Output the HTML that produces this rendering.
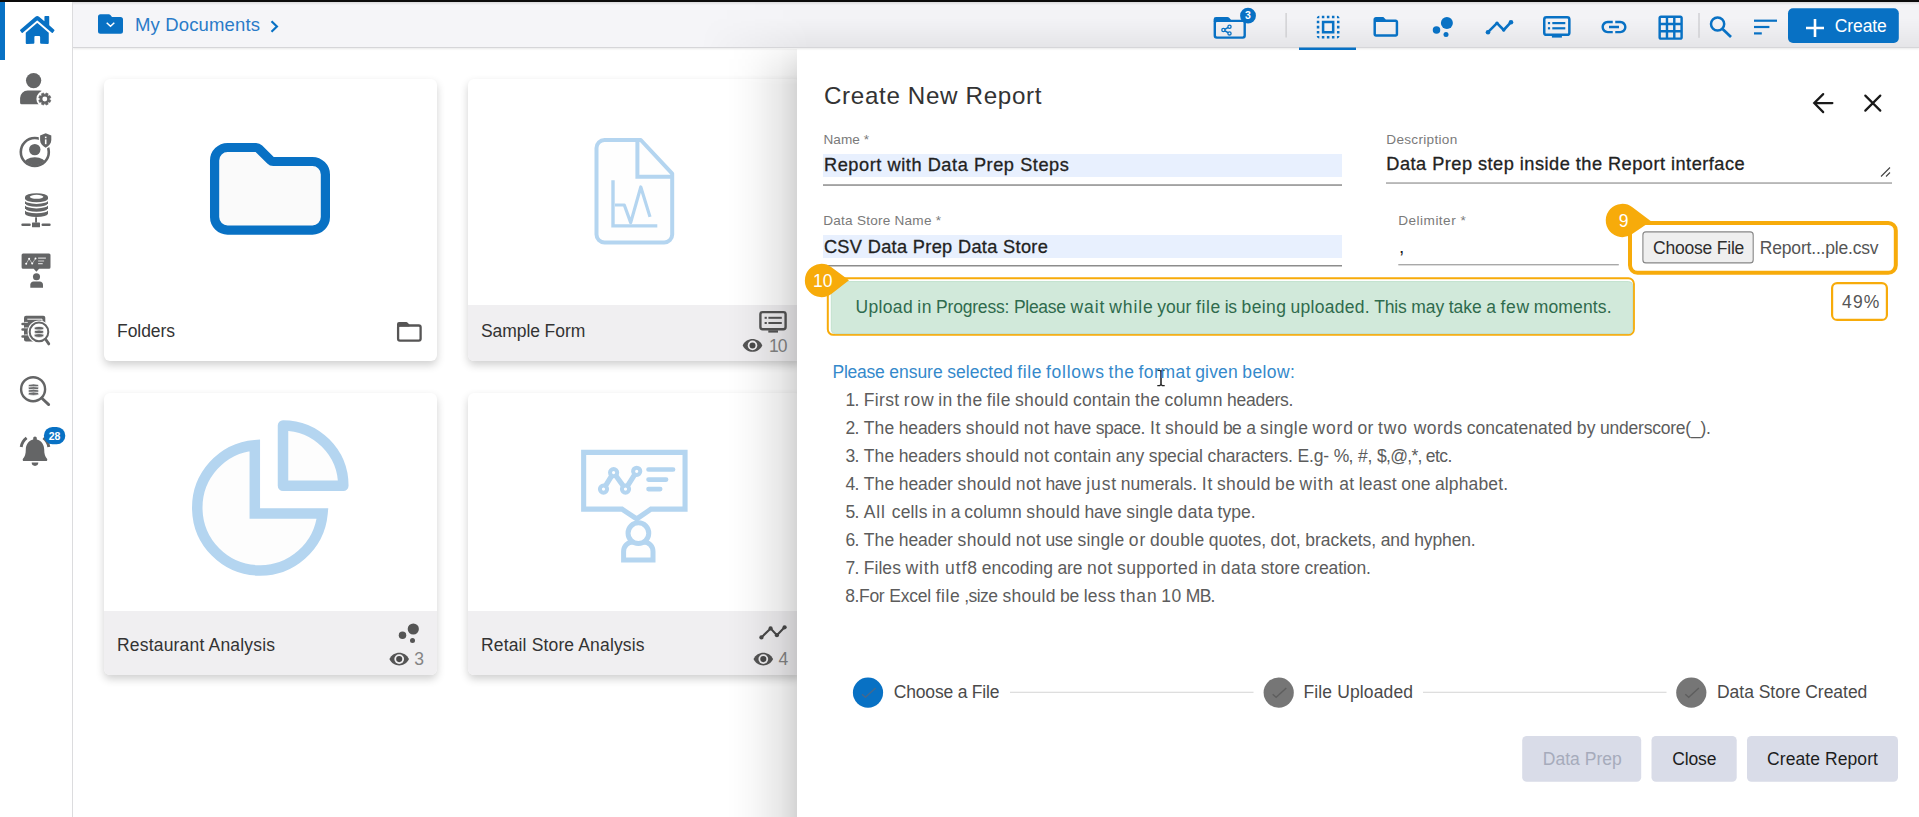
<!DOCTYPE html>
<html><head><meta charset="utf-8"><title>My Documents</title>
<style>
html,body{margin:0;padding:0;}
html{width:1919px;height:817px;overflow:hidden;}
body{width:1919px;height:817px;overflow:hidden;background:#fff;position:relative;font-family:"Liberation Sans",sans-serif;}
.t{position:absolute;white-space:nowrap;line-height:1;}
.a{position:absolute;}
svg{position:absolute;overflow:visible;}
</style></head><body>
<div class="a" style="left:73px;top:2px;width:1846px;height:45px;background:#f5f5f8;border-bottom:1px solid #d6d6d9;box-shadow:0 1px 2px rgba(0,0,0,.09);"></div>
<div class="a" style="left:700px;top:2px;width:1219px;height:45px;background:linear-gradient(180deg,rgba(0,0,0,.004) 0,rgba(0,0,0,.008) 35%,rgba(0,0,0,.035) 70%,rgba(0,0,0,.062) 100%);-webkit-mask-image:linear-gradient(90deg,transparent 0,#000 110px);mask-image:linear-gradient(90deg,transparent 0,#000 110px);"></div>
<div class="a" style="left:73px;top:2px;width:1846px;height:3px;background:linear-gradient(180deg,rgba(0,0,0,.11),rgba(0,0,0,0));"></div>
<div class="a" style="left:0;top:2px;width:72px;height:815px;background:#fff;border-right:1px solid #dcdcde;"></div>
<div class="a" style="left:0;top:2px;width:5px;height:58px;background:#0871c4;"></div>
<div class="a" style="left:0;top:0;width:1919px;height:2px;background:#0c0c0c;"></div>
<svg style="left:19.8px;top:13.81px" width="34.50" height="31.89" viewBox="0 0 576 512" preserveAspectRatio="none"><path fill="#0871c4" d="M280.37 148.26L96 300.11V464a16 16 0 0 0 16 16l112.06-.29a16 16 0 0 0 15.92-16V368a16 16 0 0 1 16-16h64a16 16 0 0 1 16 16v95.64a16 16 0 0 0 16 16.05L464 480a16 16 0 0 0 16-16V300L295.67 148.26a12.19 12.19 0 0 0-15.3 0zM571.6 251.47L488 182.56V44.05a12 12 0 0 0-12-12h-56a12 12 0 0 0-12 12v72.61L318.47 43a48 48 0 0 0-61 0L4.34 251.47a12 12 0 0 0-1.6 16.9l25.5 31A12 12 0 0 0 45.15 301l235.22-193.74a12.19 12.19 0 0 1 15.3 0L530.9 301a12 12 0 0 0 16.9-1.6l25.5-31a12 12 0 0 0-1.7-16.93z"/></svg>
<svg style="left:0;top:0" width="80" height="817" viewBox="0 0 80 817"><path fill="#646566" d="M20.100 102.700v-4.700a7.600 7.600 0 0 1 7.600-7.600h12.300a6 6 0 0 1 4 1.500v12.300h-22.400a1.500 1.500 0 0 1-1.500-1.500z"/><circle cx="33.600" cy="80.600" r="8.900" fill="#fff"/><circle cx="33.600" cy="80.600" r="7.650" fill="#646566"/><circle cx="44.8" cy="99" r="8.4" fill="#fff"/><path d="M50.88 100.21L49.96 102.44L48.60 101.90L47.70 102.80L48.24 104.16L46.01 105.08L45.44 103.73L44.16 103.73L43.59 105.08L41.36 104.16L41.90 102.80L41.00 101.90L39.64 102.44L38.72 100.21L40.07 99.64L40.07 98.36L38.72 97.79L39.64 95.56L41.00 96.10L41.90 95.20L41.36 93.84L43.59 92.92L44.16 94.27L45.44 94.27L46.01 92.92L48.24 93.84L47.70 95.20L48.60 96.10L49.96 95.56L50.88 97.79L49.53 98.36L49.53 99.64Z" fill="#646566" stroke="#646566" stroke-width=".6" stroke-linejoin="round"/><circle cx="44.8" cy="99" r="2.48" fill="#fff"/><clipPath id="uc"><circle cx="34.8" cy="152" r="13.2"/></clipPath><circle cx="34.8" cy="152" r="14" fill="none" stroke="#646566" stroke-width="2.6"/><circle cx="34.8" cy="149.600" r="5.700" fill="#646566"/><ellipse cx="34.8" cy="164" rx="11.200" ry="6.800" fill="#646566" clip-path="url(#uc)"/><path d="M45.700 133.300l5.600 2.200v4.500c0 3.500-2.400 6.200-5.600 7.700-3.200-1.500-5.600-4.200-5.600-7.700v-4.500z" fill="#646566" stroke="#fff" stroke-width="2.600" stroke-linejoin="round"/><path d="M45.700 133.300l5.600 2.200v4.500c0 3.500-2.400 6.200-5.600 7.700-3.200-1.500-5.600-4.200-5.600-7.700v-4.500z" fill="#646566"/><rect x="44.900" y="139.400" width="1.600" height="4.800" fill="#fff"/><rect x="44.900" y="136.600" width="1.600" height="1.600" fill="#fff"/><path fill="#646566" d="M25 196.800v16.700a11.500 3.600 0 0 0 23 0v-16.700a11.500 3.600 0 0 0-23 0z"/><ellipse cx="36.600" cy="196.800" rx="6.800" ry="2" fill="#fff"/><path d="M25 199.5a11.500 3.600 0 0 0 23 0" fill="none" stroke="#fff" stroke-width="1.600"/><path d="M25 204.05a11.500 3.600 0 0 0 23 0" fill="none" stroke="#fff" stroke-width="1.600"/><path d="M25 208.95a11.500 3.600 0 0 0 23 0" fill="none" stroke="#fff" stroke-width="1.600"/><rect x="35.100" y="217.300" width="1.900" height="5.300" fill="#646566"/><rect x="32" y="222.400" width="8" height="4.900" rx=".6" fill="#646566"/><path d="M22.500 224.800h7.100M42.700 224.800h6.800" stroke="#646566" stroke-width="2.400" stroke-linecap="round"/><path fill="#646566" d="M23.100 253.400h25.900a1.500 1.500 0 0 1 1.500 1.500v12.300a1.500 1.500 0 0 1-1.500 1.500h-9.900l-2.700 3.100-2.700-3.100h-10.600a1.500 1.500 0 0 1-1.500-1.500v-12.300a1.500 1.500 0 0 1 1.500-1.500z"/><path d="M26.200 263.700l2.900-4.900 3.100 4.800 3.300-5.100" fill="none" stroke="#fff" stroke-opacity=".75" stroke-width=".7"/><circle cx="26.2" cy="263.7" r="1" fill="#fff"/><circle cx="29.1" cy="258.8" r="1" fill="#fff"/><circle cx="32.2" cy="263.6" r="1" fill="#fff"/><circle cx="35.5" cy="258.5" r="1" fill="#fff"/><path d="M38.100 258.100h7.800M38.100 261h6M38.100 263.700h4.600" stroke="#fff" stroke-opacity=".72" stroke-width="1.200"/><circle cx="36.500" cy="276.800" r="3.550" fill="#646566"/><path fill="#646566" d="M30.300 287.800v-3.200c0-1.900 1.400-3.200 3.200-3.200h6.300c1.800 0 3.200 1.300 3.200 3.200v3.200z"/><rect x="24" y="315.700" width="21.300" height="25.800" rx="2" fill="#646566"/><path d="M27.300 319.200h14.700v6" fill="none" stroke="#fff" stroke-width="1"/><path stroke="#646566" stroke-width="2.600" stroke-linecap="round" d="M22.600 324h4M22.600 329.500h4M22.600 336.500h4"/><path stroke="#fff" stroke-width=".8" d="M24.300 322.400h3.500M24.300 327.900h3.500M24.300 334.900h3.500"/><path stroke="#fff" stroke-width="5" stroke-linecap="round" d="M45.300 339.300l3.300 4.600"/><circle cx="39" cy="331.900" r="11.400" fill="#fff"/><circle cx="39" cy="331.900" r="9.300" fill="#fff" stroke="#646566" stroke-width="2"/><path stroke="#646566" stroke-width="2.800" stroke-linecap="round" d="M45.600 339.300l3.200 4.600"/><ellipse cx="39" cy="328.3" rx="4.800" ry="1.900" fill="#646566" stroke="#fff" stroke-width=".7"/><ellipse cx="39" cy="331.9" rx="4.800" ry="1.900" fill="#646566" stroke="#fff" stroke-width=".7"/><ellipse cx="39" cy="335.5" rx="4.800" ry="1.900" fill="#646566" stroke="#fff" stroke-width=".7"/><circle cx="33.100" cy="389.200" r="12" fill="#fff" stroke="#646566" stroke-width="2.400"/><path stroke="#646566" stroke-width="2.800" stroke-linecap="round" d="M41.900 398.300l6.800 6.300"/><ellipse cx="33.500" cy="385.6" rx="5.300" ry="1.700" fill="#6a6b6d" stroke="#fff" stroke-width=".7"/><ellipse cx="33.500" cy="388.3" rx="5.300" ry="1.700" fill="#6a6b6d" stroke="#fff" stroke-width=".7"/><ellipse cx="33.500" cy="391" rx="5.300" ry="1.700" fill="#6a6b6d" stroke="#fff" stroke-width=".7"/><ellipse cx="33.500" cy="393.7" rx="5.300" ry="1.700" fill="#6a6b6d" stroke="#fff" stroke-width=".7"/><path fill="#646566" d="M35 436.400c1 0 1.800.8 1.800 1.800v1.200c4.500 1 7.400 5.200 7.400 10.100 0 4.600.9 7.200 2.800 9.200.7.800.2 2.400-.9 2.400h-22.200c-1.100 0-1.600-1.600-.9-2.400 1.900-2 2.800-4.600 2.800-9.200 0-4.900 2.900-9.100 7.400-10.100v-1.200c0-1 .8-1.800 1.800-1.800z"/><path fill="#646566" d="M31.700 462.600h6.600a3.300 3.300 0 0 1-6.600 0z"/><path fill="none" stroke="#646566" stroke-width="2.900" stroke-linecap="butt" d="M26.600 437.800c-3 2.300-4.900 5.400-5.400 9.200M43.400 437.800c3 2.300 4.900 5.400 5.400 9.200"/><rect x="43.900" y="427.100" width="21.400" height="17.200" rx="8.600" fill="#0871c4"/></svg>
<span class="t" style="left:48.76px;top:431px;font-size:10.5px;color:#fff;font-weight:bold;">28</span>
<svg style="left:0;top:0" width="1919" height="60" viewBox="0 0 1919 60"><path fill="#0871c4" d="M100.500 14.300h8.200c.7 0 1.300.3 1.700.8l1.600 2h8.500a2.500 2.500 0 0 1 2.500 2.500v11.700a2.500 2.500 0 0 1-2.500 2.500h-20a2.500 2.500 0 0 1-2.500-2.500v-14.500a2.500 2.500 0 0 1 2.500-2.500z"/><path d="M106.700 22.700l3.800 3.600 3.800-3.600" fill="none" stroke="#fff" stroke-width="1.500"/><path d="M271.500 21.300l5.400 5.200-5.400 5.200" fill="none" stroke="#0871c4" stroke-width="2.200"/><path fill="#0871c4" d="M1213.600 22v-2.600a2.400 2.400 0 0 1 2.400-2.400h11.400c.7 0 1.400.3 1.800.8l1.900 2.100v2.100z"/><rect x="1214.800" y="20.900" width="29.900" height="16.700" rx="2" fill="none" stroke="#0871c4" stroke-width="2.400"/><path d="M1229.300 26.800l-5.900 3.200 5.900 3.400" fill="none" stroke="#0871c4" stroke-width="1.500"/><circle cx="1223.4" cy="30" r="1.600" fill="#f0f0f2" stroke="#0871c4" stroke-width="1.300"/><circle cx="1229.5" cy="26.7" r="1.600" fill="#f0f0f2" stroke="#0871c4" stroke-width="1.300"/><circle cx="1229.5" cy="33.4" r="1.600" fill="#f0f0f2" stroke="#0871c4" stroke-width="1.300"/><circle cx="1248" cy="15.650" r="7.900" fill="#0871c4"/><rect x="1285.500" y="13" width="1.200" height="24.500" fill="#c9c9cc"/><rect x="1698.400" y="13" width="1.200" height="24.800" fill="#c9c9cc"/><rect x="1299" y="47.500" width="57" height="2.500" fill="#0871c4"/><circle cx="1446.9" cy="23.1" r="6" fill="#0871c4"/><circle cx="1436.5" cy="30" r="3.75" fill="#0871c4"/><circle cx="1446" cy="34.4" r="2.5" fill="#0871c4"/><path d="M1488 32.200L1497 23.200L1503.700 30L1511 22.200" fill="none" stroke="#0871c4" stroke-width="2.600" stroke-linejoin="round" stroke-linecap="round"/><circle cx="1488" cy="32.200" r="2.300" fill="#0871c4"/><circle cx="1511" cy="22.200" r="2.300" fill="#0871c4"/><circle cx="1497" cy="23.200" r="1.700" fill="#0871c4"/><circle cx="1503.700" cy="30" r="1.700" fill="#0871c4"/><rect x="1544.250" y="17.250" width="25.100" height="17.600" rx="2.200" fill="none" stroke="#0871c4" stroke-width="2.500"/><rect x="1551.900" y="35.500" width="10" height="2.100" fill="#0871c4"/><rect x="1547.900" y="22.0" width="2.200" height="2.200" fill="#0871c4"/><rect x="1552.300" y="22.0" width="13" height="2.200" fill="#0871c4"/><rect x="1547.900" y="27.2" width="2.200" height="2.200" fill="#0871c4"/><rect x="1552.300" y="27.2" width="13" height="2.200" fill="#0871c4"/><circle cx="1717.600" cy="24" r="6.600" fill="none" stroke="#0871c4" stroke-width="2.500"/><path d="M1722.600 29l8.400 8" stroke="#0871c4" stroke-width="2.700"/><rect x="1754" y="19.600" width="23" height="2.200" fill="#0871c4"/><rect x="1754" y="25.900" width="15.400" height="2.200" fill="#0871c4"/><rect x="1754" y="32.300" width="7.800" height="2.200" fill="#0871c4"/><rect x="1788" y="8.300" width="110.800" height="34.600" rx="5" fill="#0871c4"/><path d="M1806 28h18M1815 19v18" stroke="#fff" stroke-width="2.600"/></svg>
<svg style="left:1313.22px;top:12.22px" width="30.27" height="30.27" viewBox="0 0 24 24"><path fill="#0871c4" d="M3 5h2V3c-1.1 0-2 .9-2 2zm0 8h2v-2H3v2zm4 8h2v-2H7v2zM3 9h2V7H3v2zm10-6h-2v2h2V3zm6 0v2h2c0-1.1-.9-2-2-2zM5 21v-2H3c0 1.1.9 2 2 2zm-2-4h2v-2H3v2zM9 3H7v2h2V3zm2 18h2v-2h-2v2zm8-8h2v-2h-2v2zm0 8c1.1 0 2-.9 2-2h-2v2zm0-12h2V7h-2v2zm0 8h2v-2h-2v2zm-4 4h2v-2h-2v2zm0-16h2V3h-2v2zM7 17h10V7H7v10zm2-8h6v6H9V9z"/></svg>
<svg style="left:1370.53px;top:12.06px" width="29.64" height="29.64" viewBox="0 0 24 24"><path fill="#0871c4" d="M20 6h-8l-2-2H4c-1.1 0-1.99.9-1.99 2L2 18c0 1.1.9 2 2 2h16c1.100 0 2-.9 2-2V8c0-1.100-.9-2-2-2zm0 12H4V8h16v10z"/></svg>
<svg style="left:1598.50px;top:12.00px" width="30.00" height="30.00" viewBox="0 0 24 24"><path fill="#0871c4" d="M3.900 12c0-1.710 1.390-3.100 3.100-3.100h4V7H7c-2.760 0-5 2.240-5 5s2.240 5 5 5h4v-1.900H7c-1.710 0-3.100-1.390-3.100-3.100zM8 13h8v-2H8v2zm9-6h-4v1.900h4c1.710 0 3.100 1.390 3.100 3.100s-1.390 3.100-3.100 3.100h-4V17h4c2.760 0 5-2.240 5-5s-2.240-5-5-5z"/></svg>
<svg style="left:1656.46px;top:12.56px" width="29.28" height="29.28" viewBox="0 0 24 24"><path fill="#0871c4" d="M20 2H4c-1.100 0-2 .9-2 2v16c0 1.100.9 2 2 2h16c1.100 0 2-.9 2-2V4c0-1.100-.9-2-2-2zM8 20H4v-4h4v4zm0-6H4v-4h4v4zm0-6H4V4h4v4zm6 12h-4v-4h4v4zm0-6h-4v-4h4v4zm0-6h-4V4h4v4zm6 12h-4v-4h4v4zm0-6h-4v-4h4v4zm0-6h-4V4h4v4z"/></svg>
<span class="t" style="left:135.00px;top:16px;font-size:18.5px;color:#2a7bc8;letter-spacing:0.149px;">My Documents</span>
<span class="t" style="left:1834.80px;top:18px;font-size:17.5px;color:#fff;letter-spacing:-0.104px;">Create</span>
<span class="t" style="left:1245.08px;top:10px;font-size:10.5px;color:#fff;font-weight:bold;">3</span>
<div class="a" style="left:104px;top:79px;width:333px;height:282px;background:#fff;border-radius:6px;box-shadow:0 4px 8px 0 rgba(0,0,0,.19);"></div>
<div class="a" style="left:468px;top:79px;width:333px;height:282px;background:#fff;border-radius:6px;box-shadow:0 4px 8px 0 rgba(0,0,0,.19);overflow:hidden"><div class="a" style="left:0;top:225.500px;width:333px;height:57px;background:#f0eff1"></div></div>
<div class="a" style="left:104px;top:392.500px;width:333px;height:282.300px;background:#fff;border-radius:6px;box-shadow:0 4px 8px 0 rgba(0,0,0,.19);overflow:hidden"><div class="a" style="left:0;top:218.700px;width:333px;height:64px;background:#f0eff1"></div></div>
<div class="a" style="left:468px;top:392.500px;width:333px;height:282.300px;background:#fff;border-radius:6px;box-shadow:0 4px 8px 0 rgba(0,0,0,.19);overflow:hidden"><div class="a" style="left:0;top:218.700px;width:333px;height:64px;background:#f0eff1"></div></div>
<svg style="left:0;top:0" width="840" height="817" viewBox="0 0 840 817"><path d="M227.600 147.500h28.500a4 4 0 0 1 2.800 1.200l11.600 11.600a4 4 0 0 0 2.800 1.200h39.100a13 13 0 0 1 13 13v42.600a13 13 0 0 1-13 13h-84.800a13 13 0 0 1-13-13v-56.600a13 13 0 0 1 13-13z" fill="#fafafa" stroke="#0871c4" stroke-width="9.200" stroke-linejoin="round"/><rect x="398.100" y="325.500" width="22.500" height="15.100" rx="1.800" fill="none" stroke="#565555" stroke-width="2.300"/><path d="M397 326.500v-2.500a2 2 0 0 1 2-2h7.200c.6 0 1.100.2 1.500.7l1.700 1.800v2z" fill="#565555"/><path d="M604.500 140h36.300l31.400 33.600v60.800a8 8 0 0 1-8 8h-59.700a8 8 0 0 1-8-8v-86.400a8 8 0 0 1 8-8z" fill="#fefefe" stroke="#b4d5f0" stroke-width="4" stroke-linejoin="round"/><path d="M637.400 140v36.700h34.600" fill="none" stroke="#b4d5f0" stroke-width="4"/><path d="M613 180.200v45.700h44.300" fill="none" stroke="#b4d5f0" stroke-width="3.400"/><path d="M615 205h9.300l6.400 17.600 10.100-35.600 9.200 29.900" fill="none" stroke="#b4d5f0" stroke-width="3.200" stroke-linejoin="round"/><rect x="760.400" y="312.100" width="25.200" height="17.100" rx="2.200" fill="none" stroke="#555" stroke-width="2.400"/><rect x="768.300" y="330.300" width="9.700" height="2.300" fill="#555"/><rect x="764.600" y="316.8" width="2.200" height="2" fill="#555"/><rect x="768.400" y="316.8" width="13.400" height="2" fill="#555"/><rect x="764.600" y="322" width="2.200" height="2" fill="#555"/><rect x="768.400" y="322" width="13.400" height="2" fill="#555"/><path d="M742.70 345.40C746.62 336.95 758.38 336.95 762.30 345.40C758.38 353.85 746.62 353.85 742.70 345.40Z" fill="#555"/><circle cx="752.50" cy="345.40" r="4.80" fill="#f0eff1"/><circle cx="752.50" cy="345.40" r="3.01" fill="#4a4a4a"/><path d="M389.40 659.10C393.32 650.52 405.08 650.52 409.00 659.10C405.08 667.68 393.32 667.68 389.40 659.10Z" fill="#555"/><circle cx="399.20" cy="659.10" r="4.88" fill="#f0eff1"/><circle cx="399.20" cy="659.10" r="3.05" fill="#4a4a4a"/><path d="M753.50 659.10C757.42 650.52 769.18 650.52 773.10 659.10C769.18 667.68 757.42 667.68 753.50 659.10Z" fill="#555"/><circle cx="763.30" cy="659.10" r="4.88" fill="#f0eff1"/><circle cx="763.30" cy="659.10" r="3.05" fill="#4a4a4a"/><path d="M254.800 513.500V445.200A62.750 62.750 0 1 0 322.500 513.500Z" fill="#fdfdfd" stroke="#b4d5f0" stroke-width="10.500" stroke-linejoin="miter"/><path d="M283 485.700V425.400A60.300 60.300 0 0 1 343.300 485.700Z" fill="#fdfdfd" stroke="#b4d5f0" stroke-width="10.500" stroke-linejoin="round"/><circle cx="413.3" cy="629" r="5.6" fill="#555"/><circle cx="402.5" cy="635.2" r="3.75" fill="#555"/><circle cx="412.5" cy="640.4" r="2.5" fill="#555"/><path d="M583.650 452.350h101.400v56.800h-34.100l-14.200 9.700-14.800-9.700h-38.300z" fill="#fefefe" stroke="#b4d5f0" stroke-width="5.100" stroke-linejoin="miter"/><path d="M603.500 489.100L613.600 472.600L625.500 489.100L636.700 471.300" fill="none" stroke="#b4d5f0" stroke-width="5.200"/><circle cx="603.5" cy="489.1" r="3.600" fill="#fefefe" stroke="#b4d5f0" stroke-width="4"/><circle cx="613.6" cy="472.6" r="3.600" fill="#fefefe" stroke="#b4d5f0" stroke-width="4"/><circle cx="625.5" cy="489.1" r="3.600" fill="#fefefe" stroke="#b4d5f0" stroke-width="4"/><circle cx="636.7" cy="471.3" r="3.600" fill="#fefefe" stroke="#b4d5f0" stroke-width="4"/><path d="M648.500 469.500h24.600M648.500 479.600h17.600M648.500 489.100h11.700" stroke="#b4d5f0" stroke-width="4.600" stroke-linecap="round"/><path d="M623.600 560v-8.500c0-5.500 4-9.500 9.500-9.500h10.400c5.500 0 9.500 4 9.500 9.500v8.500z" fill="#fefefe" stroke="#b4d5f0" stroke-width="5"/><circle cx="638.400" cy="533.200" r="10.350" fill="#fefefe" stroke="#b4d5f0" stroke-width="5"/><path d="M761.400 637.400L770.600 628.400L776.900 635.200L784.600 627.300" fill="none" stroke="#4a4a4a" stroke-width="2.100" stroke-linejoin="round" stroke-linecap="round"/><circle cx="761.4" cy="637.4" r="2.100" fill="#4a4a4a"/><circle cx="770.6" cy="628.4" r="2.100" fill="#4a4a4a"/><circle cx="776.9" cy="635.2" r="2.100" fill="#4a4a4a"/><circle cx="784.6" cy="627.3" r="2.100" fill="#4a4a4a"/></svg>
<span class="t" style="left:117.00px;top:323px;font-size:17.5px;color:#333;letter-spacing:-0.058px;">Folders</span>
<span class="t" style="left:481.00px;top:323px;font-size:17.5px;color:#333;letter-spacing:-0.082px;">Sample Form</span>
<span class="t" style="left:117.00px;top:637px;font-size:17.5px;color:#333;letter-spacing:0.186px;">Restaurant Analysis</span>
<span class="t" style="left:481.00px;top:637px;font-size:17.5px;color:#333;letter-spacing:0.151px;">Retail Store Analysis</span>
<span class="t" style="left:769.00px;top:338px;font-size:17.5px;color:#858585;letter-spacing:-0.963px;">10</span>
<span class="t" style="left:414.30px;top:651px;font-size:17.5px;color:#858585;">3</span>
<span class="t" style="left:778.60px;top:651px;font-size:17.5px;color:#858585;">4</span>
<div class="a" style="left:727px;top:49px;width:70px;height:768px;-webkit-mask-image:linear-gradient(180deg,rgba(0,0,0,.3) 0,#000 36px);mask-image:linear-gradient(180deg,rgba(0,0,0,.3) 0,#000 36px);background:linear-gradient(90deg,rgba(0,0,0,0) 0,rgba(0,0,0,.012) 18.6%,rgba(0,0,0,.025) 33%,rgba(0,0,0,.045) 47%,rgba(0,0,0,.065) 61%,rgba(0,0,0,.09) 76%,rgba(0,0,0,.135) 90%,rgba(0,0,0,.17) 100%);"></div>
<div class="a" style="left:797px;top:50.500px;width:1122px;height:766.500px;background:#fff;border-radius:3px 0 0 0;"></div>
<svg style="left:0;top:0" width="1919" height="817" viewBox="0 0 1919 817"><path d="M1832.400 103.100h-17.800M1823.200 94.100l-9 9 9 9" fill="none" stroke="#1a1a1a" stroke-width="2.200" stroke-linecap="round" stroke-linejoin="miter"/><path d="M1865.300 95.600l15 15M1880.300 95.600l-15 15" stroke="#1a1a1a" stroke-width="2.200" stroke-linecap="round"/><rect x="823" y="154" width="519" height="23" fill="#e8f0fe"/><rect x="823" y="235" width="519" height="23" fill="#e8f0fe"/><rect x="823" y="184.300" width="519" height="1.500" fill="#8c8c8c"/><rect x="1386" y="182.300" width="506" height="1.500" fill="#a6a6a6"/><rect x="823" y="265" width="519" height="1.500" fill="#8c8c8c"/><rect x="1398.300" y="264" width="220.500" height="1.400" fill="#a9a9a9"/><path d="M1881 176.500l9-9M1886 176.500l4-4" stroke="#444" stroke-width="1.100"/><rect x="827.800" y="278.300" width="806.100" height="56.500" rx="5.500" fill="#fff" stroke="#f7ab0a" stroke-width="2"/><rect x="831.300" y="281.600" width="801.300" height="52" rx="4" fill="#d1e9da" stroke="#c2e2cd" stroke-width="1"/><path d="M831.48 267.18A16.65 16.65 0 1 0 831.68 293.68L849 280.3Z" fill="#f7ab0a"/><rect x="1630" y="223" width="265.800" height="49.800" rx="7.500" fill="#fff" stroke="#f7ab0a" stroke-width="4"/><path d="M1632.42 207.20A16.65 16.65 0 1 0 1631.76 234.27L1651 221.2Z" fill="#f7ab0a"/><rect x="1642.900" y="231.900" width="110.300" height="31" rx="3" fill="#efefef" stroke="#868686" stroke-width="1.100"/><rect x="1832.100" y="283.100" width="54.800" height="36.800" rx="5" fill="#fff" stroke="#f7ab0a" stroke-width="2.200"/><rect x="1010" y="691.700" width="243.500" height="1.300" fill="#dedede"/><rect x="1423" y="691.700" width="243.500" height="1.300" fill="#dedede"/><circle cx="868" cy="692.600" r="15.100" fill="#0871c4"/><path d="M862 694.300l3.400 2.900 10.200-9.200" fill="none" stroke="#46688c" stroke-width="1.400"/><circle cx="1278.700" cy="692.600" r="15.100" fill="#767676"/><path d="M1272.700 694.300l3.400 2.900 10.200-9.200" fill="none" stroke="#5e5e5e" stroke-width="1.400"/><circle cx="1691.300" cy="692.600" r="15.100" fill="#767676"/><path d="M1685.300 694.300l3.400 2.900 10.200-9.200" fill="none" stroke="#5e5e5e" stroke-width="1.400"/><rect x="1522.200" y="736" width="119" height="45.700" rx="4.500" fill="#d9dce8"/><rect x="1651.500" y="736" width="85.200" height="45.700" rx="4.500" fill="#d9dce8"/><rect x="1747" y="736" width="151" height="45.700" rx="4.500" fill="#d9dce8"/><path d="M1157.500 370.300h2.300l1.200 1 1.200-1h2.300M1157.300 385.600h2.500l1.200-1 1.200 1h2.500" fill="none" stroke="#222" stroke-width="1.300"/><path d="M1161 371v14" fill="none" stroke="#333" stroke-width="1.700"/></svg>
<span class="t" style="left:824.00px;top:84px;font-size:24.2px;color:#333;letter-spacing:0.649px;">Create New Report</span>
<span class="t" style="left:823.50px;top:133px;font-size:13.6px;color:#7a7a7a;letter-spacing:0.031px;">Name *</span>
<span class="t" style="left:1386.30px;top:133px;font-size:13.6px;color:#7a7a7a;letter-spacing:0.298px;">Description</span>
<span class="t" style="left:823.30px;top:214px;font-size:13.6px;color:#7a7a7a;letter-spacing:0.223px;">Data Store Name *</span>
<span class="t" style="left:1398.30px;top:214px;font-size:13.6px;color:#7a7a7a;letter-spacing:0.468px;">Delimiter *</span>
<span class="t" style="left:824.00px;top:156px;font-size:18.2px;color:#222;letter-spacing:0.553px;-webkit-text-stroke:.3px #222;">Report with Data Prep Steps</span>
<span class="t" style="left:1386.30px;top:155px;font-size:18.2px;color:#222;letter-spacing:0.478px;-webkit-text-stroke:.3px #222;">Data Prep step inside the Report interface</span>
<span class="t" style="left:823.90px;top:238px;font-size:18.2px;color:#222;letter-spacing:0.332px;-webkit-text-stroke:.3px #222;">CSV Data Prep Data Store</span>
<span class="t" style="left:1399.00px;top:237px;font-size:19px;color:#222;">,</span>
<span class="t" style="left:1653.00px;top:240px;font-size:17.5px;color:#2e2e2e;letter-spacing:-0.207px;">Choose File</span>
<span class="t" style="left:1759.80px;top:240px;font-size:17.5px;color:#555;letter-spacing:-0.185px;">Report...ple.csv</span>
<span class="t" style="left:813.07px;top:273px;font-size:17.5px;color:#fff;">10</span>
<span class="t" style="left:1618.63px;top:213px;font-size:17.5px;color:#fff;">9</span>
<span class="t" style="left:855.50px;top:299px;font-size:17.5px;color:#2f6b4d;letter-spacing:0.339px;">Upload</span>
<span class="t" style="left:917.25px;top:299px;font-size:17.5px;color:#2f6b4d;letter-spacing:0.530px;">in</span>
<span class="t" style="left:936.00px;top:299px;font-size:17.5px;color:#2f6b4d;letter-spacing:-0.185px;">Progress:</span>
<span class="t" style="left:1014.00px;top:299px;font-size:17.5px;color:#2f6b4d;letter-spacing:-0.321px;">Please</span>
<span class="t" style="left:1070.50px;top:299px;font-size:17.5px;color:#2f6b4d;letter-spacing:0.900px;">wait</span>
<span class="t" style="left:1109.25px;top:299px;font-size:17.5px;color:#2f6b4d;letter-spacing:0.880px;">while</span>
<span class="t" style="left:1157.25px;top:299px;font-size:17.5px;color:#2f6b4d;letter-spacing:0.037px;">your</span>
<span class="t" style="left:1196.00px;top:299px;font-size:17.5px;color:#2f6b4d;letter-spacing:0.593px;">file</span>
<span class="t" style="left:1224.75px;top:299px;font-size:17.5px;color:#2f6b4d;letter-spacing:-0.488px;">is</span>
<span class="t" style="left:1241.50px;top:299px;font-size:17.5px;color:#2f6b4d;letter-spacing:0.396px;">being</span>
<span class="t" style="left:1290.50px;top:299px;font-size:17.5px;color:#2f6b4d;letter-spacing:0.285px;">uploaded.</span>
<span class="t" style="left:1374.25px;top:299px;font-size:17.5px;color:#2f6b4d;letter-spacing:-0.220px;">This</span>
<span class="t" style="left:1411.25px;top:299px;font-size:17.5px;color:#2f6b4d;letter-spacing:-0.079px;">may</span>
<span class="t" style="left:1448.75px;top:299px;font-size:17.5px;color:#2f6b4d;letter-spacing:-0.058px;">take</span>
<span class="t" style="left:1486.25px;top:299px;font-size:17.5px;color:#2f6b4d;">a</span>
<span class="t" style="left:1500.50px;top:299px;font-size:17.5px;color:#2f6b4d;letter-spacing:0.709px;">few</span>
<span class="t" style="left:1533.75px;top:299px;font-size:17.5px;color:#2f6b4d;letter-spacing:0.133px;">moments.</span>
<span class="t" style="left:1842.00px;top:294px;font-size:17.5px;color:#555;letter-spacing:1.188px;">49%</span>
<span class="t" style="left:832.50px;top:364px;font-size:17.5px;color:#3489cb;letter-spacing:-0.271px;">Please</span>
<span class="t" style="left:889.25px;top:364px;font-size:17.5px;color:#3489cb;letter-spacing:-0.021px;">ensure</span>
<span class="t" style="left:947.25px;top:364px;font-size:17.5px;color:#3489cb;letter-spacing:0.032px;">selected</span>
<span class="t" style="left:1017.25px;top:364px;font-size:17.5px;color:#3489cb;letter-spacing:0.593px;">file</span>
<span class="t" style="left:1046.00px;top:364px;font-size:17.5px;color:#3489cb;letter-spacing:0.735px;">follows</span>
<span class="t" style="left:1108.50px;top:364px;font-size:17.5px;color:#3489cb;letter-spacing:0.538px;">the</span>
<span class="t" style="left:1138.50px;top:364px;font-size:17.5px;color:#3489cb;letter-spacing:0.512px;">format</span>
<span class="t" style="left:1195.25px;top:364px;font-size:17.5px;color:#3489cb;letter-spacing:0.142px;">given</span>
<span class="t" style="left:1242.25px;top:364px;font-size:17.5px;color:#3489cb;letter-spacing:0.413px;">below:</span>
<span class="t" style="left:845.50px;top:392px;font-size:17.5px;color:#5c5c5c;letter-spacing:-0.700px;">1.</span>
<span class="t" style="left:863.75px;top:392px;font-size:17.5px;color:#5c5c5c;letter-spacing:0.346px;">First</span>
<span class="t" style="left:903.75px;top:392px;font-size:17.5px;color:#5c5c5c;letter-spacing:0.852px;">row</span>
<span class="t" style="left:938.25px;top:392px;font-size:17.5px;color:#5c5c5c;letter-spacing:0.280px;">in</span>
<span class="t" style="left:956.75px;top:392px;font-size:17.5px;color:#5c5c5c;letter-spacing:0.537px;">the</span>
<span class="t" style="left:986.75px;top:392px;font-size:17.5px;color:#5c5c5c;letter-spacing:0.427px;">file</span>
<span class="t" style="left:1015.00px;top:392px;font-size:17.5px;color:#5c5c5c;letter-spacing:0.367px;">should</span>
<span class="t" style="left:1073.00px;top:392px;font-size:17.5px;color:#5c5c5c;letter-spacing:0.162px;">contain</span>
<span class="t" style="left:1135.00px;top:392px;font-size:17.5px;color:#5c5c5c;letter-spacing:0.288px;">the</span>
<span class="t" style="left:1164.50px;top:392px;font-size:17.5px;color:#5c5c5c;letter-spacing:0.298px;">column</span>
<span class="t" style="left:1227.00px;top:392px;font-size:17.5px;color:#5c5c5c;letter-spacing:-0.257px;">headers.</span>
<span class="t" style="left:845.50px;top:420px;font-size:17.5px;color:#5c5c5c;letter-spacing:-0.700px;">2.</span>
<span class="t" style="left:863.75px;top:420px;font-size:17.5px;color:#5c5c5c;letter-spacing:0.124px;">The</span>
<span class="t" style="left:898.75px;top:420px;font-size:17.5px;color:#5c5c5c;letter-spacing:-0.139px;">headers</span>
<span class="t" style="left:965.75px;top:420px;font-size:17.5px;color:#5c5c5c;letter-spacing:0.367px;">should</span>
<span class="t" style="left:1023.75px;top:420px;font-size:17.5px;color:#5c5c5c;letter-spacing:0.538px;">not</span>
<span class="t" style="left:1053.75px;top:420px;font-size:17.5px;color:#5c5c5c;letter-spacing:-0.182px;">have</span>
<span class="t" style="left:1095.75px;top:420px;font-size:17.5px;color:#5c5c5c;letter-spacing:-0.381px;">space.</span>
<span class="t" style="left:1150.00px;top:420px;font-size:17.5px;color:#5c5c5c;letter-spacing:0.677px;">It</span>
<span class="t" style="left:1165.00px;top:420px;font-size:17.5px;color:#5c5c5c;letter-spacing:0.367px;">should</span>
<span class="t" style="left:1223.00px;top:420px;font-size:17.5px;color:#5c5c5c;letter-spacing:-0.700px;">be</span>
<span class="t" style="left:1246.25px;top:420px;font-size:17.5px;color:#5c5c5c;">a</span>
<span class="t" style="left:1260.00px;top:420px;font-size:17.5px;color:#5c5c5c;letter-spacing:0.436px;">single</span>
<span class="t" style="left:1312.50px;top:420px;font-size:17.5px;color:#5c5c5c;letter-spacing:0.824px;">word</span>
<span class="t" style="left:1357.50px;top:420px;font-size:17.5px;color:#5c5c5c;letter-spacing:0.341px;">or</span>
<span class="t" style="left:1378.00px;top:420px;font-size:17.5px;color:#5c5c5c;letter-spacing:0.900px;">two</span>
<span class="t" style="left:1413.75px;top:420px;font-size:17.5px;color:#5c5c5c;letter-spacing:0.430px;">words</span>
<span class="t" style="left:1466.75px;top:420px;font-size:17.5px;color:#5c5c5c;letter-spacing:0.029px;">concatenated</span>
<span class="t" style="left:1576.75px;top:420px;font-size:17.5px;color:#5c5c5c;letter-spacing:0.168px;">by</span>
<span class="t" style="left:1600.00px;top:420px;font-size:17.5px;color:#5c5c5c;letter-spacing:-0.222px;">underscore(_).</span>
<span class="t" style="left:845.50px;top:448px;font-size:17.5px;color:#5c5c5c;letter-spacing:-0.700px;">3.</span>
<span class="t" style="left:863.75px;top:448px;font-size:17.5px;color:#5c5c5c;letter-spacing:0.124px;">The</span>
<span class="t" style="left:898.75px;top:448px;font-size:17.5px;color:#5c5c5c;letter-spacing:-0.139px;">headers</span>
<span class="t" style="left:965.75px;top:448px;font-size:17.5px;color:#5c5c5c;letter-spacing:0.367px;">should</span>
<span class="t" style="left:1023.75px;top:448px;font-size:17.5px;color:#5c5c5c;letter-spacing:0.538px;">not</span>
<span class="t" style="left:1053.75px;top:448px;font-size:17.5px;color:#5c5c5c;letter-spacing:0.162px;">contain</span>
<span class="t" style="left:1115.75px;top:448px;font-size:17.5px;color:#5c5c5c;letter-spacing:0.093px;">any</span>
<span class="t" style="left:1148.75px;top:448px;font-size:17.5px;color:#5c5c5c;letter-spacing:-0.054px;">special</span>
<span class="t" style="left:1207.50px;top:448px;font-size:17.5px;color:#5c5c5c;letter-spacing:-0.115px;">characters.</span>
<span class="t" style="left:1297.50px;top:448px;font-size:17.5px;color:#5c5c5c;letter-spacing:-0.148px;">E.g-</span>
<span class="t" style="left:1333.75px;top:448px;font-size:17.5px;color:#5c5c5c;letter-spacing:-0.700px;">%,</span>
<span class="t" style="left:1358.00px;top:448px;font-size:17.5px;color:#5c5c5c;letter-spacing:-0.193px;">#,</span>
<span class="t" style="left:1377.00px;top:448px;font-size:17.5px;color:#5c5c5c;letter-spacing:-0.700px;">$,@,*,</span>
<span class="t" style="left:1425.75px;top:448px;font-size:17.5px;color:#5c5c5c;letter-spacing:-0.552px;">etc.</span>
<span class="t" style="left:845.50px;top:476px;font-size:17.5px;color:#5c5c5c;letter-spacing:-0.700px;">4.</span>
<span class="t" style="left:863.75px;top:476px;font-size:17.5px;color:#5c5c5c;letter-spacing:0.124px;">The</span>
<span class="t" style="left:898.75px;top:476px;font-size:17.5px;color:#5c5c5c;letter-spacing:-0.067px;">header</span>
<span class="t" style="left:957.50px;top:476px;font-size:17.5px;color:#5c5c5c;letter-spacing:0.417px;">should</span>
<span class="t" style="left:1015.75px;top:476px;font-size:17.5px;color:#5c5c5c;letter-spacing:0.413px;">not</span>
<span class="t" style="left:1045.50px;top:476px;font-size:17.5px;color:#5c5c5c;letter-spacing:-0.598px;">have</span>
<span class="t" style="left:1086.25px;top:476px;font-size:17.5px;color:#5c5c5c;letter-spacing:0.889px;">just</span>
<span class="t" style="left:1120.75px;top:476px;font-size:17.5px;color:#5c5c5c;letter-spacing:-0.054px;">numerals.</span>
<span class="t" style="left:1201.75px;top:476px;font-size:17.5px;color:#5c5c5c;letter-spacing:0.900px;">It</span>
<span class="t" style="left:1217.00px;top:476px;font-size:17.5px;color:#5c5c5c;letter-spacing:0.367px;">should</span>
<span class="t" style="left:1275.00px;top:476px;font-size:17.5px;color:#5c5c5c;letter-spacing:0.437px;">be</span>
<span class="t" style="left:1299.50px;top:476px;font-size:17.5px;color:#5c5c5c;letter-spacing:0.900px;">with</span>
<span class="t" style="left:1339.25px;top:476px;font-size:17.5px;color:#5c5c5c;letter-spacing:0.307px;">at</span>
<span class="t" style="left:1358.75px;top:476px;font-size:17.5px;color:#5c5c5c;letter-spacing:0.234px;">least</span>
<span class="t" style="left:1401.25px;top:476px;font-size:17.5px;color:#5c5c5c;letter-spacing:-0.022px;">one</span>
<span class="t" style="left:1435.00px;top:476px;font-size:17.5px;color:#5c5c5c;letter-spacing:0.125px;">alphabet.</span>
<span class="t" style="left:845.50px;top:504px;font-size:17.5px;color:#5c5c5c;letter-spacing:-0.700px;">5.</span>
<span class="t" style="left:863.75px;top:504px;font-size:17.5px;color:#5c5c5c;letter-spacing:0.900px;">All</span>
<span class="t" style="left:891.75px;top:504px;font-size:17.5px;color:#5c5c5c;letter-spacing:0.160px;">cells</span>
<span class="t" style="left:932.00px;top:504px;font-size:17.5px;color:#5c5c5c;letter-spacing:0.530px;">in</span>
<span class="t" style="left:950.75px;top:504px;font-size:17.5px;color:#5c5c5c;">a</span>
<span class="t" style="left:964.25px;top:504px;font-size:17.5px;color:#5c5c5c;letter-spacing:0.198px;">column</span>
<span class="t" style="left:1026.25px;top:504px;font-size:17.5px;color:#5c5c5c;letter-spacing:0.417px;">should</span>
<span class="t" style="left:1084.50px;top:504px;font-size:17.5px;color:#5c5c5c;letter-spacing:-0.265px;">have</span>
<span class="t" style="left:1126.25px;top:504px;font-size:17.5px;color:#5c5c5c;letter-spacing:0.186px;">single</span>
<span class="t" style="left:1177.50px;top:504px;font-size:17.5px;color:#5c5c5c;letter-spacing:0.448px;">data</span>
<span class="t" style="left:1217.50px;top:504px;font-size:17.5px;color:#5c5c5c;letter-spacing:0.016px;">type.</span>
<span class="t" style="left:845.50px;top:532px;font-size:17.5px;color:#5c5c5c;letter-spacing:-0.700px;">6.</span>
<span class="t" style="left:863.75px;top:532px;font-size:17.5px;color:#5c5c5c;letter-spacing:0.124px;">The</span>
<span class="t" style="left:898.75px;top:532px;font-size:17.5px;color:#5c5c5c;letter-spacing:-0.067px;">header</span>
<span class="t" style="left:957.50px;top:532px;font-size:17.5px;color:#5c5c5c;letter-spacing:0.417px;">should</span>
<span class="t" style="left:1015.75px;top:532px;font-size:17.5px;color:#5c5c5c;letter-spacing:0.413px;">not</span>
<span class="t" style="left:1045.50px;top:532px;font-size:17.5px;color:#5c5c5c;letter-spacing:-0.407px;">use</span>
<span class="t" style="left:1077.50px;top:532px;font-size:17.5px;color:#5c5c5c;letter-spacing:0.186px;">single</span>
<span class="t" style="left:1128.75px;top:532px;font-size:17.5px;color:#5c5c5c;letter-spacing:0.900px;">or</span>
<span class="t" style="left:1150.00px;top:532px;font-size:17.5px;color:#5c5c5c;letter-spacing:0.321px;">double</span>
<span class="t" style="left:1208.75px;top:532px;font-size:17.5px;color:#5c5c5c;letter-spacing:-0.025px;">quotes,</span>
<span class="t" style="left:1270.60px;top:532px;font-size:17.5px;color:#5c5c5c;letter-spacing:0.304px;">dot,</span>
<span class="t" style="left:1305.30px;top:532px;font-size:17.5px;color:#5c5c5c;letter-spacing:-0.018px;">brackets,</span>
<span class="t" style="left:1380.75px;top:532px;font-size:17.5px;color:#5c5c5c;letter-spacing:-0.147px;">and</span>
<span class="t" style="left:1414.25px;top:532px;font-size:17.5px;color:#5c5c5c;letter-spacing:-0.137px;">hyphen.</span>
<span class="t" style="left:845.50px;top:560px;font-size:17.5px;color:#5c5c5c;letter-spacing:-0.700px;">7.</span>
<span class="t" style="left:863.75px;top:560px;font-size:17.5px;color:#5c5c5c;letter-spacing:0.051px;">Files</span>
<span class="t" style="left:905.50px;top:560px;font-size:17.5px;color:#5c5c5c;letter-spacing:0.900px;">with</span>
<span class="t" style="left:945.00px;top:560px;font-size:17.5px;color:#5c5c5c;letter-spacing:0.900px;">utf8</span>
<span class="t" style="left:981.75px;top:560px;font-size:17.5px;color:#5c5c5c;letter-spacing:0.017px;">encoding</span>
<span class="t" style="left:1057.50px;top:560px;font-size:17.5px;color:#5c5c5c;letter-spacing:-0.195px;">are</span>
<span class="t" style="left:1087.00px;top:560px;font-size:17.5px;color:#5c5c5c;letter-spacing:0.538px;">not</span>
<span class="t" style="left:1117.00px;top:560px;font-size:17.5px;color:#5c5c5c;letter-spacing:0.384px;">supported</span>
<span class="t" style="left:1202.50px;top:560px;font-size:17.5px;color:#5c5c5c;letter-spacing:0.030px;">in</span>
<span class="t" style="left:1220.75px;top:560px;font-size:17.5px;color:#5c5c5c;letter-spacing:0.448px;">data</span>
<span class="t" style="left:1260.75px;top:560px;font-size:17.5px;color:#5c5c5c;letter-spacing:0.087px;">store</span>
<span class="t" style="left:1304.60px;top:560px;font-size:17.5px;color:#5c5c5c;letter-spacing:-0.102px;">creation.</span>
<span class="t" style="left:845.20px;top:588px;font-size:17.5px;color:#5c5c5c;letter-spacing:-0.348px;">8.For</span>
<span class="t" style="left:889.25px;top:588px;font-size:17.5px;color:#5c5c5c;letter-spacing:-0.223px;">Excel</span>
<span class="t" style="left:935.75px;top:588px;font-size:17.5px;color:#5c5c5c;letter-spacing:0.510px;">file</span>
<span class="t" style="left:964.25px;top:588px;font-size:17.5px;color:#5c5c5c;letter-spacing:-0.583px;">,size</span>
<span class="t" style="left:1002.50px;top:588px;font-size:17.5px;color:#5c5c5c;letter-spacing:0.267px;">should</span>
<span class="t" style="left:1060.00px;top:588px;font-size:17.5px;color:#5c5c5c;letter-spacing:-0.313px;">be</span>
<span class="t" style="left:1083.75px;top:588px;font-size:17.5px;color:#5c5c5c;letter-spacing:0.177px;">less</span>
<span class="t" style="left:1120.00px;top:588px;font-size:17.5px;color:#5c5c5c;letter-spacing:0.864px;">than</span>
<span class="t" style="left:1161.25px;top:588px;font-size:17.5px;color:#5c5c5c;letter-spacing:0.437px;">10</span>
<span class="t" style="left:1185.75px;top:588px;font-size:17.5px;color:#5c5c5c;letter-spacing:-0.700px;">MB.</span>
<span class="t" style="left:893.80px;top:684px;font-size:17.5px;color:#4a4a4a;letter-spacing:-0.189px;">Choose a File</span>
<span class="t" style="left:1303.40px;top:684px;font-size:17.5px;color:#4a4a4a;letter-spacing:0.135px;">File Uploaded</span>
<span class="t" style="left:1717.00px;top:684px;font-size:17.5px;color:#4a4a4a;letter-spacing:-0.027px;">Data Store Created</span>
<span class="t" style="left:1542.80px;top:751px;font-size:17.5px;color:#a6abbb;letter-spacing:0.026px;">Data Prep</span>
<span class="t" style="left:1672.30px;top:751px;font-size:17.5px;color:#1d1d1d;letter-spacing:-0.160px;">Close</span>
<span class="t" style="left:1767.00px;top:751px;font-size:17.5px;color:#1d1d1d;letter-spacing:0.083px;">Create Report</span>
</body></html>
